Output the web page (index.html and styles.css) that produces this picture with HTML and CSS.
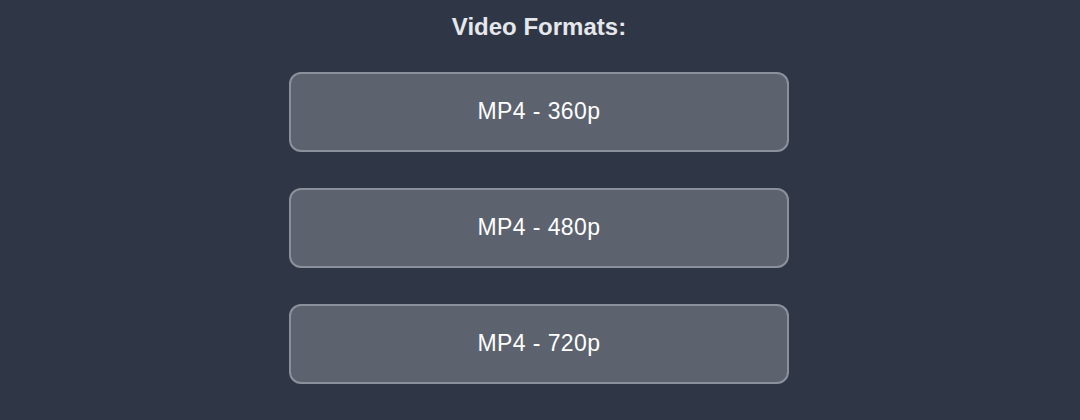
FILE: index.html
```html
<!DOCTYPE html>
<html lang="en">
<head>
  <meta charset="UTF-8" />
  <title>Video Formats</title>
  <meta name="viewport" content="width=device-width, initial-scale=1" />
  <link rel="stylesheet" href="styles.css">
</head>
<body>

  <main class="formats">
    <h2>Video Formats:</h2>
    <div class="format-list">
      <button class="format-btn">MP4 - 360p</button>
      <button class="format-btn">MP4 - 480p</button>
      <button class="format-btn">MP4 - 720p</button>
    </div>
  </main>

</body>
</html>
```

FILE: styles.css
```css
body {
  margin: 0;
  background-color: #2f3747;
  font-family: 'Liberation Sans', Arial, sans-serif;
  height: 420px;
  overflow: hidden;
}

.formats {
  display: flex;
  flex-direction: column;
  align-items: center;
  padding-top: 13px;
  padding-right: 2px;
}

h2 {
  margin: 0 0 31px;
  font-size: 24px;
  line-height: 28px;
  font-weight: 700;
  color: #e5e7eb;
}

.format-list {
  display: flex;
  flex-direction: column;
  gap: 36px;
}

.format-btn {
  width: 500px;
  height: 80px;
  background-color: #5c636f;
  border: 2px solid #8a919d;
  border-radius: 12px;
  color: white;
  font-family: inherit;
  font-size: 23px;
  letter-spacing: 0.4px;
  padding-top: 0;
  padding-bottom: 2px;
  cursor: pointer;
}
```
